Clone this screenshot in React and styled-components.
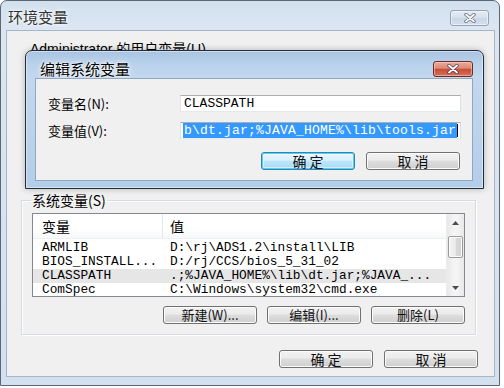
import React from 'react'
import styled, { createGlobalStyle, css } from 'styled-components'

const GlobalStyle = createGlobalStyle`
  html, body {
    margin: 0;
    padding: 0;
    background: #ffffff;
  }
  body {
    font-family: "Noto Sans CJK SC", "Liberation Sans", sans-serif;
    font-size: 12px;
    color: #000;
  }
`

const mono = `"Liberation Mono", "Noto Sans CJK SC", monospace`

const systemVars = [
  { name: 'ARMLIB', value: 'D:\\rj\\ADS1.2\\install\\LIB' },
  { name: 'BIOS_INSTALL...', value: 'D:/rj/CCS/bios_5_31_02' },
  { name: 'CLASSPATH', value: '.;%JAVA_HOME%\\lib\\dt.jar;%JAVA_...', selected: true },
  { name: 'ComSpec', value: 'C:\\Windows\\system32\\cmd.exe' },
]

const CloseGlyph = () => (
  <svg width="14" height="10" viewBox="0 0 14 10">
    <path d="M3 1.5 L11 8.5 M11 1.5 L3 8.5" stroke="rgba(40,40,60,0.75)" strokeWidth="3.4" strokeLinecap="round" fill="none" />
    <path d="M3 1.5 L11 8.5 M11 1.5 L3 8.5" stroke="#fff" strokeWidth="1.8" strokeLinecap="round" fill="none" />
  </svg>
)

const Arrow = ({ down }) => (
  <svg width="7" height="4" viewBox="0 0 7 4">
    <path d={down ? 'M0 0 L7 0 L3.5 4 Z' : 'M0 4 L7 4 L3.5 0 Z'} fill="#4d4d4d" />
  </svg>
)

export default function App() {
  return (
    <>
      <GlobalStyle />
      <Window>
        <TitleBar>
          <Title>环境变量</Title>
          <CloseButton>
            <CloseGlyph />
          </CloseButton>
        </TitleBar>

        <Client>
          <UserGroup>
            <UserLabel>Administrator 的用户变量(U)</UserLabel>
          </UserGroup>

          <GroupBox>
            <Legend>系统变量(S)</Legend>
            <ListView>
              <ListTable>
                <HeaderRow>
                  <NameCell $head>变量</NameCell>
                  <ValueCell $head>值</ValueCell>
                </HeaderRow>
                <ListBody>
                  {systemVars.map(v => (
                    <Row key={v.name} $selected={v.selected}>
                      <NameCell>{v.name}</NameCell>
                      <ValueCell>{v.value}</ValueCell>
                    </Row>
                  ))}
                </ListBody>
              </ListTable>
              <ScrollBar>
                <ScrollArrow><Arrow /></ScrollArrow>
                <ScrollTrack>
                  <ScrollThumb />
                </ScrollTrack>
                <ScrollArrow><Arrow down /></ScrollArrow>
              </ScrollBar>
            </ListView>
            <ButtonRow>
              <Button>新建(W)...</Button>
              <Button>编辑(I)...</Button>
              <Button>删除(L)</Button>
            </ButtonRow>
          </GroupBox>

          <Footer>
            <Button $wide>确定</Button>
            <Button $wide>取消</Button>
          </Footer>
        </Client>

        <Modal>
          <ModalTitleBar>
            <ModalTitle>编辑系统变量</ModalTitle>
            <RedClose>
              <CloseGlyph />
            </RedClose>
          </ModalTitleBar>
          <ModalClient>
            <FieldRow>
              <FieldLabel>变量名(N):</FieldLabel>
              <TextBox>CLASSPATH</TextBox>
            </FieldRow>
            <FieldRow>
              <FieldLabel>变量值(V):</FieldLabel>
              <TextBox>
                <Selection>b\dt.jar;%JAVA_HOME%\lib\tools.jar</Selection>
                <Caret />
              </TextBox>
            </FieldRow>
            <ModalButtons>
              <Button $wide $focused>确定</Button>
              <Button $wide>取消</Button>
            </ModalButtons>
          </ModalClient>
        </Modal>
      </Window>
    </>
  )
}

const Window = styled.div`
  position: relative;
  width: 500px;
  height: 386px;
  box-sizing: border-box;
  border: 1px solid #5a6775;
  border-radius: 7px 7px 0 0;
  background: linear-gradient(to bottom, #d2e0ee 0px, #dbe6f2 28px, #d3e0ee 100%);
  display: flex;
  flex-direction: column;
`

const TitleBar = styled.div`
  height: 29px;
  display: flex;
  align-items: flex-start;
  justify-content: space-between;
  padding: 0 10px 0 7px;
`

const Title = styled.div`
  margin-top: 6px;
  font-size: 15px;
  line-height: 19px;
  color: #333;
  text-shadow: 0 0 5px #fff, 0 0 3px #fff;
`

const CloseButton = styled.div`
  margin-top: 9px;
  width: 39px;
  height: 16px;
  box-sizing: border-box;
  border: 1px solid #8898ad;
  border-radius: 3px;
  background: linear-gradient(to bottom, #e7eef6 0%, #d4dfeb 50%, #c8d5e4 51%, #d3deeb 100%);
  box-shadow: inset 0 0 0 1px rgba(255, 255, 255, 0.6);
  display: flex;
  align-items: center;
  justify-content: center;
  opacity: 0.85;
`

const Client = styled.div`
  flex: 1;
  margin: 0 4px 8px 5px;
  box-sizing: border-box;
  background: #f0f0f0;
  border: 1px solid #a5b6c9;
  padding: 10px 0 0 14px;
  display: flex;
  flex-direction: column;
`

const UserGroup = styled.section`
  height: 151px;
  flex: none;
`

const UserLabel = styled.div`
  padding-left: 9px;
  font-size: 14px;
  line-height: 16px;
  font-family: "Liberation Sans", "Noto Sans CJK SC", sans-serif;
`

const GroupBox = styled.fieldset`
  margin: 0;
  width: 455px;
  box-sizing: border-box;
  border: 1px solid #d5dbe0;
  box-shadow: 1px 1px 0 #fff, inset 1px 1px 0 #fff;
  padding: 5px 10px 10px 10px;
  min-width: 0;
`

const Legend = styled.legend`
  padding: 0 1px;
  margin-left: -1px;
  font-size: 14px;
  line-height: 16px;
  color: #000;
`

const ListView = styled.div`
  height: 84px;
  box-sizing: border-box;
  border: 1px solid #828790;
  background: #fff;
  display: flex;
  overflow: hidden;
`

const ListTable = styled.div`
  flex: 1;
  min-width: 0;
  display: flex;
  flex-direction: column;
`

const HeaderRow = styled.div`
  height: 24px;
  flex: none;
  display: flex;
  align-items: center;
  background: linear-gradient(to bottom, #ffffff 0%, #ffffff 60%, #f7f8f9 100%);
  border-bottom: 1px solid #eef0f2;
`

const ListBody = styled.div`
  padding-top: 2px;
  flex: 1;
  overflow: hidden;
`

const Row = styled.div`
  height: 14px;
  display: flex;
  align-items: center;
  background: ${p => (p.$selected ? '#e6e6e6' : 'transparent')};
`

const cellText = css`
  white-space: nowrap;
  overflow: hidden;
  box-sizing: border-box;
  ${p =>
    p.$head
      ? css`
          font-size: 14px;
          line-height: 24px;
          height: 24px;
        `
      : css`
          font-family: ${mono};
          font-size: 12.8px;
          line-height: 14px;
        `}
`

const NameCell = styled.div`
  ${cellText};
  width: 129px;
  flex: none;
  padding-left: 9px;
`

const ValueCell = styled.div`
  ${cellText};
  flex: 1;
  padding-left: 7px;
  border-left: ${p => (p.$head ? '1px solid #e3e6ea' : '1px solid transparent')};
`

const ScrollBar = styled.div`
  width: 17px;
  flex: none;
  display: flex;
  flex-direction: column;
  background: linear-gradient(to right, #e8e8e8, #f4f4f4 40%, #f4f4f4 60%, #e8e8e8);
  border-left: 1px solid #ededed;
`

const ScrollArrow = styled.div`
  height: 17px;
  display: flex;
  align-items: center;
  justify-content: center;
`

const ScrollTrack = styled.div`
  flex: 1;
  padding: 5px 1px 0 1px;
`

const ScrollThumb = styled.div`
  height: 22px;
  box-sizing: border-box;
  border: 1px solid #9a9a9a;
  border-radius: 2px;
  background: linear-gradient(to right, #f4f4f4 0%, #e9e9e9 50%, #d9d9d9 51%, #d2d2d2 100%);
  box-shadow: inset 0 0 0 1px #fbfbfb;
`

const ButtonRow = styled.div`
  margin-top: 9px;
  display: flex;
  justify-content: flex-end;
  gap: 10px;
`

const Button = styled.div`
  width: ${p => (p.$wide ? '94px' : '94px')};
  height: 18px;
  box-sizing: border-box;
  border: 1px solid ${p => (p.$focused ? '#3c7fb1' : '#707070')};
  border-radius: 3px;
  background: ${p =>
    p.$focused
      ? 'linear-gradient(to bottom, #eaf6fd 0%, #d9f0fc 45%, #bee6fd 50%, #a7d9f5 100%)'
      : 'linear-gradient(to bottom, #f2f2f2 0%, #ebebeb 45%, #dddddd 50%, #cfcfcf 100%)'};
  box-shadow: ${p =>
    p.$focused ? 'inset 0 0 0 1px #48d4f7, inset 0 0 0 2px rgba(255,255,255,0.5)' : 'inset 0 0 0 1px #fcfcfc'};
  display: flex;
  align-items: center;
  justify-content: center;
  font-size: ${p => (p.$wide ? '14px' : '13px')};
  letter-spacing: ${p => (p.$wide ? '3px' : '0')};
  text-indent: ${p => (p.$wide ? '3px' : '0')};
  line-height: 16px;
  color: #111;
  white-space: nowrap;
`

const Footer = styled.div`
  margin-top: 15px;
  padding-right: 16px;
  display: flex;
  justify-content: flex-end;
  gap: 11px;
`

/* the active child dialog floats over the parent window */
const Modal = styled.div`
  position: absolute;
  left: 24px;
  top: 49px;
  width: 459px;
  height: 139px;
  box-sizing: border-box;
  border: 1px solid #202d3a;
  border-radius: 7px 7px 0 0;
  background: linear-gradient(to bottom, #a9c4e2 0px, #bad2ec 14px, #c3d8ee 27px, #b4cde8 100%);
  box-shadow: 0 0 6px rgba(0, 0, 0, 0.25), inset 0 0 0 1px rgba(255, 255, 255, 0.45);
  display: flex;
  flex-direction: column;
`

const ModalTitleBar = styled.div`
  height: 27px;
  flex: none;
  display: flex;
  align-items: flex-start;
  justify-content: space-between;
  padding: 0 10px 0 14px;
`

const ModalTitle = styled.div`
  margin-top: 9px;
  font-size: 15px;
  line-height: 18px;
  color: #000;
  text-shadow: 0 0 6px #fff, 0 0 3px #fff, 0 0 1px #fff;
`

const RedClose = styled.div`
  margin-top: 10px;
  width: 40px;
  height: 16px;
  box-sizing: border-box;
  border: 1px solid #6e2b22;
  border-radius: 3px;
  background: linear-gradient(to bottom, #eaa99a 0%, #dd8a77 45%, #c84c38 50%, #d4705b 100%);
  box-shadow: inset 0 0 0 1px rgba(255, 220, 210, 0.5);
  display: flex;
  align-items: center;
  justify-content: center;
`

const ModalClient = styled.div`
  flex: 1;
  margin: 0 10px 7px 9px;
  box-sizing: border-box;
  background: #f0f0f0;
  border: 1px solid #8ea8c4;
  padding: 16px 11px 0 12px;
  display: flex;
  flex-direction: column;
  gap: 10px;
`

const FieldRow = styled.div`
  display: flex;
  align-items: center;
  height: 17px;
`

const FieldLabel = styled.div`
  width: 132px;
  flex: none;
  font-size: 13px;
  line-height: 17px;
`

const TextBox = styled.div`
  flex: 1;
  height: 17px;
  box-sizing: border-box;
  border: 1px solid #abadb3;
  border-color: #abadb3 #dbdfe6 #e3e9ef #e2e3ea;
  background: #fff;
  padding-left: 3px;
  display: flex;
  align-items: center;
  font-family: ${mono};
  font-size: 13px;
  line-height: 15px;
  white-space: nowrap;
  overflow: hidden;
`

const Selection = styled.span`
  background: #3399ff;
  color: #fff;
  padding: 0 1px 0 1px;
  margin-left: -1px;
  letter-spacing: 0.2px;
`

const Caret = styled.span`
  width: 1px;
  height: 13px;
  background: #000;
`

const ModalButtons = styled.div`
  margin-top: 3px;
  display: flex;
  justify-content: flex-end;
  gap: 11px;
  padding-right: 1px;
`
